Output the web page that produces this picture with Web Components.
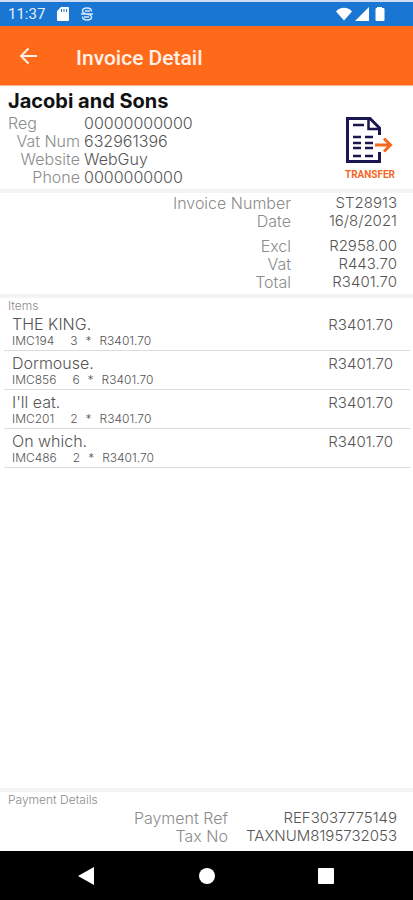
<!DOCTYPE html>
<html lang="en">
<head>
<meta charset="utf-8">
<meta name="viewport" content="width=device-width, initial-scale=1">
<title>Invoice Detail</title>
<style>
  html, body {
    height: 100%;
    margin: 0;
  }

  body {
    --line: #f4f4f4;
    --label: #8c8c8c;
    --value: #555;
    font: 300 15px/18px Inter, "Open Sans", sans-serif;
    color: var(--value);
    background: #fff;
  }
</style>
</head>
<body>
<invoice-screen>
  <status-bar slot="top" time="11:37"></status-bar>
  <app-bar slot="top">Invoice Detail</app-bar>

  <company-card name="Jacobi and Sons">
    <detail-row kind="company" first label="Reg">00000000000</detail-row>
    <detail-row kind="company" label="Vat Num">632961396</detail-row>
    <detail-row kind="company" label="Website">WebGuy</detail-row>
    <detail-row kind="company" label="Phone">0000000000</detail-row>
    <transfer-button slot="action"></transfer-button>
  </company-card>

  <invoice-section class="summary">
    <detail-row label="Invoice Number">ST28913</detail-row>
    <detail-row label="Date">16/8/2021</detail-row>
    <detail-row gap label="Excl">R2958.00</detail-row>
    <detail-row label="Vat">R443.70</detail-row>
    <detail-row label="Total">R3401.70</detail-row>
  </invoice-section>

  <invoice-section grow label="Items">
    <invoice-item code="IMC194" qty="3" price="R3401.70" total="R3401.70">THE KING.</invoice-item>
    <invoice-item code="IMC856" qty="6" price="R3401.70" total="R3401.70">Dormouse.</invoice-item>
    <invoice-item code="IMC201" qty="2" price="R3401.70" total="R3401.70">I'll eat.</invoice-item>
    <invoice-item code="IMC486" qty="2" price="R3401.70" total="R3401.70">On which.</invoice-item>
  </invoice-section>

  <invoice-section label="Payment Details">
    <detail-row kind="payment" label="Payment Ref">REF3037775149</detail-row>
    <detail-row kind="payment" label="Tax No">TAXNUM8195732053</detail-row>
  </invoice-section>

  <nav-bar slot="bottom"></nav-bar>
</invoice-screen>

<script>
(function(){

function define(name, render) {
    window.customElements.define(name, class extends HTMLElement {
        constructor() {
            super();
            this.attachShadow({mode:'open'});
        }

        connectedCallback() {
            this.shadowRoot.innerHTML = render(this);
        }
    });
}

define('invoice-screen', () => /*html*/`
<style>
    :host {
        display: flex;
        flex-direction: column;
        min-height: 100vh;
    }

    main {
        flex: 1;
        display: flex;
        flex-direction: column;
    }
</style>
<slot name="top"></slot>
<main><slot></slot></main>
<slot name="bottom"></slot>
`);

define('status-bar', el => /*html*/`
<style>
    :host {
        display: flex;
        align-items: center;
        gap: 12px;
        height: 24px;
        padding: 0 26px 0 8px;
        border-top: 2px solid #cfdcf2;
        background: #1976d2;
        color: #e6f0fb;
        font: 400 15px/24px Roboto, sans-serif;
    }

    svg {
        display: block;
        fill: #fff;
    }

    .debug {
        fill: none;
        stroke: #d6e7fa;
        stroke-width: 1.5;
    }

    .right {
        display: flex;
        gap: 3px;
        margin-left: auto;
    }
</style>
<span>${el.getAttribute('time')}</span>
<svg width="12" height="14" viewBox="0 0 12 14"><path fill-rule="evenodd" d="M4 0h7a1 1 0 0 1 1 1v12a1 1 0 0 1-1 1H1a1 1 0 0 1-1-1V4zM4 2v3h1V2zM6.500 2v3h1V2zM9 2v3h1V2z"/></svg>
<svg class="debug" width="12" height="14" viewBox="0 0 12 14"><path d="M10.500 4.500C10.500 2 9 1 6 1S1.500 2 1.500 4 3 6.500 6 7s4.500 1 4.500 3-1.500 3-4.500 3-4.500-1-4.500-3.500M0 7h12M4 4h5M3 10h5"/></svg>
<span class="right">
    <svg width="16" height="14" viewBox="0 0 16 14"><path d="M0 4.500C2 2 5 .8 8 .8s6 1.200 8 3.700L8 13.500z"/></svg>
    <svg width="14" height="14" viewBox="0 0 14 14"><path d="M14 0v14H0z"/></svg>
    <svg width="15" height="14" viewBox="0 0 15 14"><path d="M5 0h5v1h1.500a1 1 0 0 1 1 1v11a1 1 0 0 1-1 1h-7a1 1 0 0 1-1-1V2a1 1 0 0 1 1-1H5z"/></svg>
</span>
`);

define('app-bar', () => /*html*/`
<style>
    :host {
        display: flex;
        align-items: center;
        gap: 36px;
        height: 59px;
        padding: 0 16px;
        border-bottom: 1px solid #ffb58c;
        background: #ff6a1a;
        color: #fff0e8;
    }

    button {
        padding: 0;
        border: 0;
        background: none;
        cursor: pointer;
    }

    svg {
        display: block;
    }

    h1 {
        margin: 4px 0 0;
        font: 500 21px/28px Roboto, sans-serif;
    }
</style>
<button aria-label="Back"><svg width="24" height="24" viewBox="0 0 24 24" fill="none" stroke="#fff0e8" stroke-width="2"><path d="M21 12H5.500M12.500 4.500 5 12l7.500 7.500"/></svg></button>
<h1><slot></slot></h1>
`);

define('company-card', el => /*html*/`
<style>
    :host {
        display: flex;
        align-items: flex-end;
        justify-content: space-between;
        padding: 3px 18px 3px 8px;
        border-bottom: 4px solid var(--line);
    }

    h2 {
        margin: 0 0 1px;
        font-size: 20px;
        line-height: 24px;
        font-weight: 700;
        color: #111;
    }
</style>
<div>
    <h2>${el.getAttribute('name')}</h2>
    <slot></slot>
</div>
<slot name="action"></slot>
`);

define('transfer-button', () => /*html*/`
<style>
    :host {
        display: block;
        margin-bottom: 4px;
    }

    button {
        display: flex;
        flex-direction: column;
        align-items: flex-start;
        gap: 4px;
        padding: 0;
        border: 0;
        background: none;
        color: #f5681f;
        font: 700 10px/14px Roboto, sans-serif;
        cursor: pointer;
    }
</style>
<button>
    <svg width="48" height="48" viewBox="0 0 48 48" fill="none" stroke="#1b1650" stroke-width="3">
        <path d="M34.500 19v-7L25 2.500H2.500v43h32V36"/>
        <path stroke-width="2.500" d="M23.500 3v10h11"/>
        <path stroke-width="2.500" d="M8 9h11M8 21h8M20 21h8M8 27h8M20 27h8M8 32h8M20 32h8M8 40h8M20 40h8"/>
        <path stroke="#f5681f" d="M30 29h15M39 22.500l6.500 6.500-6.500 6.500"/>
    </svg>
    <span>TRANSFER</span>
</button>
`);

// kind="company" puts the value on the left, the others line up on the right edge
define('detail-row', el => /*html*/`
<style>
    :host {
        display: grid;
        grid-template-columns: 1fr 106px;
        padding-right: 16px;
        text-align: right;
    }

    :host([gap]) {
        margin-top: 7px;
    }

    :host([kind=payment]) {
        grid-template-columns: 1fr 169px;
    }

    :host([kind=company]) {
        grid-template-columns: 72px auto;
        column-gap: 4px;
        padding: 0;
        font-size: 16px;
    }

    :host([kind=company]) .value,
    :host([first]) .label {
        text-align: left;
    }

    .label {
        font-size: 16px;
        color: var(--label);
    }
</style>
<span class="label">${el.getAttribute('label')}</span>
<span class="value"><slot></slot></span>
`);

define('invoice-section', el => /*html*/`
<style>
    :host {
        display: block;
        padding-bottom: 3px;
        border-bottom: 4px solid var(--line);
    }

    :host(.summary) {
        padding-top: 1px;
    }

    :host([grow]) {
        flex: 1;
    }

    :host(:last-of-type) {
        padding-bottom: 6px;
        border: 0;
    }

    h3 {
        margin: 0;
        padding: 1px 8px 0;
        font-size: 12px;
        line-height: 13px;
        font-weight: 300;
        color: var(--label);
    }

    :host(:last-of-type) h3 {
        padding-bottom: 3px;
    }
</style>
${el.hasAttribute('label') ? `<h3>${el.getAttribute('label')}</h3>` : ''}
<slot></slot>
`);

define('invoice-item', el => /*html*/`
<style>
    :host {
        display: flex;
        justify-content: space-between;
        margin: 0 3px 0 4px;
        padding: 3px 17px 2px 8px;
        border-bottom: 1px solid #dcdcdc;
    }

    .name,
    .total {
        line-height: 19px;
    }

    .name {
        font-size: 16px;
    }

    .sub {
        display: flex;
        gap: 8px;
        font-size: 12px;
        line-height: 14px;
    }

    .code {
        margin-right: 8px;
    }
</style>
<div>
    <div class="name"><slot></slot></div>
    <div class="sub">
        <span class="code">${el.getAttribute('code')}</span>
        <span>${el.getAttribute('qty')}</span>
        <span>*</span>
        <span>${el.getAttribute('price')}</span>
    </div>
</div>
<span class="total">${el.getAttribute('total')}</span>
`);

define('nav-bar', () => /*html*/`
<style>
    :host {
        display: block;
        background: #000;
    }

    nav {
        display: flex;
        justify-content: space-between;
        padding: 16px 78px 15px;
    }

    button {
        padding: 0;
        border: 0;
        background: none;
        cursor: pointer;
    }

    svg {
        display: block;
        fill: #fff;
    }
</style>
<nav>
    <button aria-label="Back"><svg width="18" height="18" viewBox="0 0 18 18"><path d="M16 0v18L0 9z"/></svg></button>
    <button aria-label="Home"><svg width="18" height="18" viewBox="0 0 18 18"><circle cx="9" cy="9" r="8"/></svg></button>
    <button aria-label="Recent apps"><svg width="18" height="18" viewBox="0 0 18 18"><rect x="1" y="1" width="16" height="16" rx="1"/></svg></button>
</nav>
`);

})();
</script>
</body>
</html>
